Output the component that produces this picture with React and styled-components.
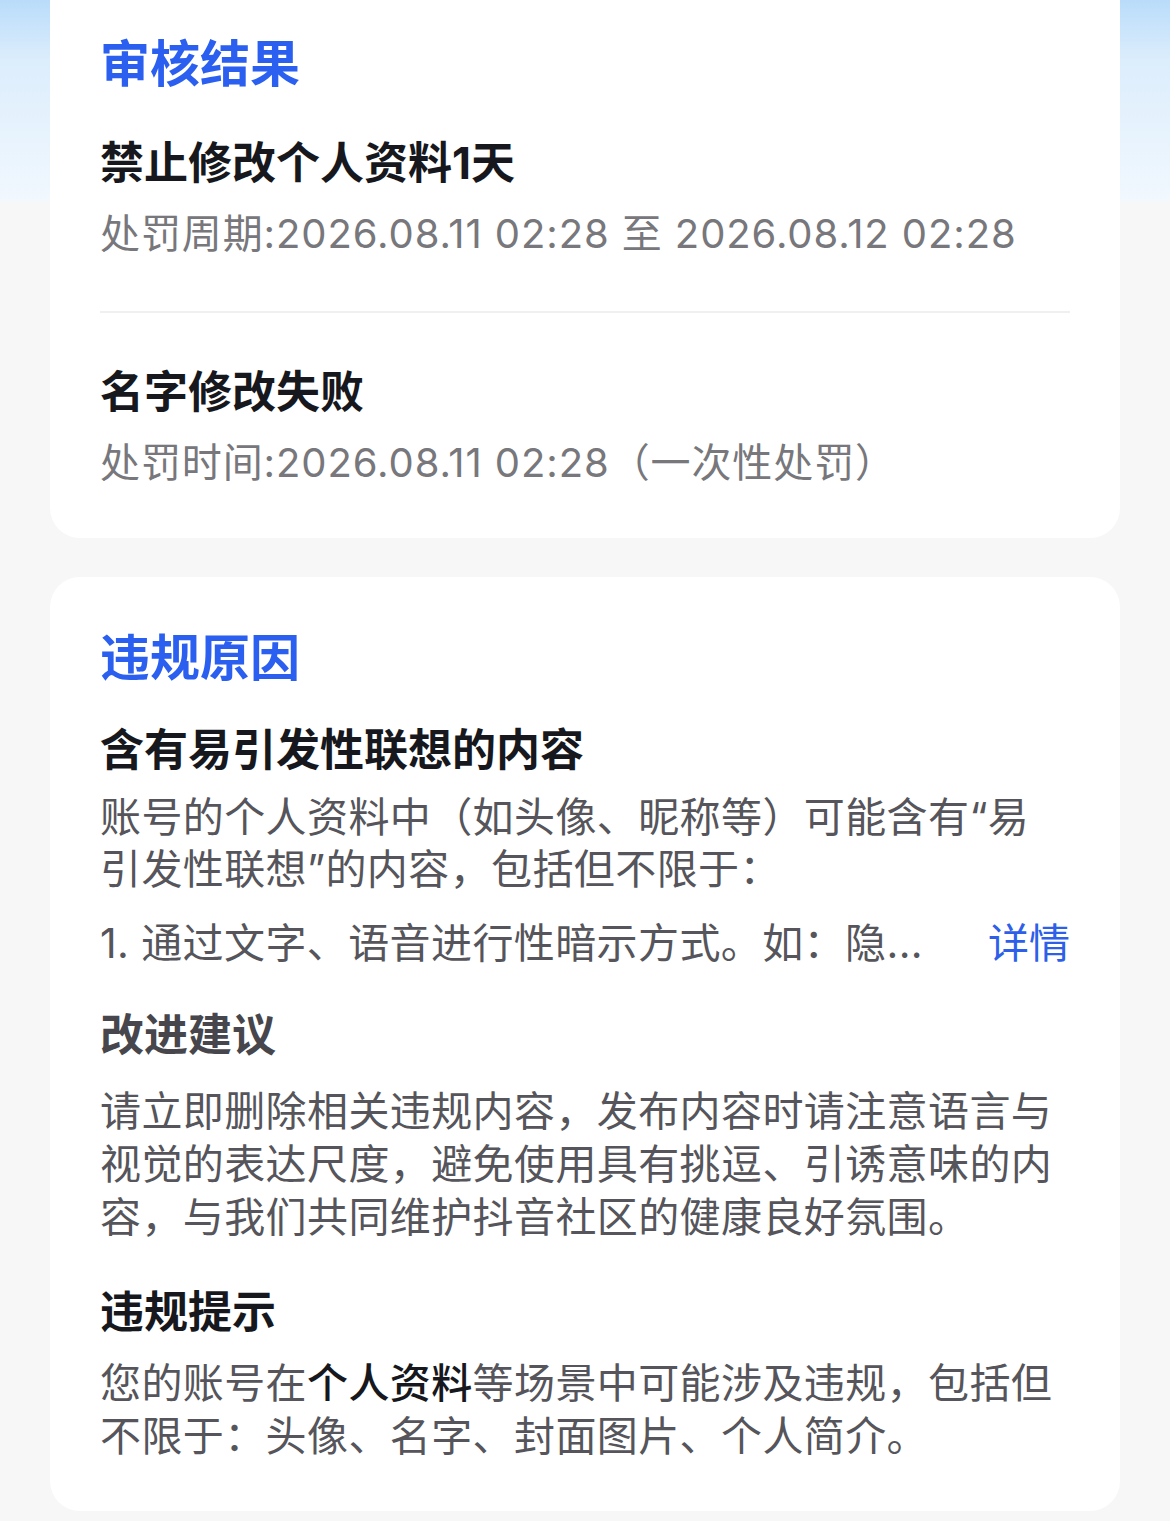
import React from "react";
import styled, { createGlobalStyle } from "styled-components";

const GlobalStyle = createGlobalStyle`
  html, body {
    margin: 0;
    padding: 0;
    background: #f7f7f8;
  }
  body {
    font-family: Inter, "Noto Sans CJK SC", "Noto Sans", sans-serif;
    -webkit-font-smoothing: antialiased;
  }
`;

const Page = styled.div`
  width: 1170px;
  min-height: 1521px;
  overflow: hidden;
  background:
    linear-gradient(180deg, #b9dcfa 0px, #dcedfc 60px, #f1f8fe 200px, #f1f8fe 201px, transparent 201px),
    #f7f7f8;
  padding: 0 50px;
  box-sizing: border-box;
  display: flex;
  flex-direction: column;
  gap: 39px;
`;

const Card = styled.section`
  background: #ffffff;
  border-radius: 30px;
  padding: ${(p) => p.$top}px 50px ${(p) => p.$bottom}px;
  margin-top: ${(p) => p.$offset || 0}px;
  display: flex;
  flex-direction: column;
`;

const SectionTitle = styled.h2`
  margin: 0;
  font-size: 50px;
  line-height: 60px;
  font-weight: 700;
  color: #2a5ff0;
`;

const ItemTitle = styled.h3`
  margin: ${(p) => p.$gap}px 0 0;
  font-size: 44px;
  line-height: 56px;
  font-weight: 700;
  color: ${(p) => (p.$muted ? "#46464c" : "#16181d")};
`;

const Meta = styled.p`
  margin: ${(p) => p.$gap}px 0 0;
  font-size: 40px;
  line-height: 52px;
  letter-spacing: 0.9px;
  color: #77777c;
  white-space: nowrap;
`;

const Divider = styled.hr`
  margin: 51px 0 0;
  border: 0;
  border-top: 2px solid #f0f0f2;
  height: 0;
`;

const Body = styled.p`
  margin: ${(p) => p.$gap}px 0 0;
  font-size: 41px;
  line-height: ${(p) => p.$lh || 53}px;
  letter-spacing: 0.4px;
  color: #55555b;
  white-space: nowrap;
`;

const Strong = styled.span`
  color: #16181d;
  font-weight: 500;
`;

const ListRow = styled.div`
  margin-top: 22px;
  display: flex;
  align-items: center;
  justify-content: space-between;
  font-size: 41px;
  line-height: 52px;
  letter-spacing: 0.4px;
`;

const ListText = styled.span`
  color: #55555b;
  white-space: nowrap;
`;

const Link = styled.a`
  color: #2d5fe8;
  text-decoration: none;
  letter-spacing: 0;
`;

export default function App() {
  return (
    <>
      <GlobalStyle />
      <Page>
        <Card $offset={-30} $top={64} $bottom={49}>
          <SectionTitle>审核结果</SectionTitle>
          <ItemTitle $gap={41}>禁止修改个人资料1天</ItemTitle>
          <Meta $gap={17}>处罚周期:2026.08.11 02:28 至 2026.08.12 02:28</Meta>
          <Divider />
          <ItemTitle $gap={51}>名字修改失败</ItemTitle>
          <Meta $gap={17}>处罚时间:2026.08.11 02:28（一次性处罚）</Meta>
        </Card>

        <Card $top={51} $bottom={48}>
          <SectionTitle>违规原因</SectionTitle>
          <ItemTitle $gap={34}>含有易引发性联想的内容</ItemTitle>
          <Body $gap={13} $lh={52}>
            账号的个人资料中（如头像、昵称等）可能含有“易
            <br />
            引发性联想”的内容，包括但不限于：
          </Body>
          <ListRow>
            <ListText>1. 通过文字、语音进行性暗示方式。如：隐...</ListText>
            <Link href="#">详情</Link>
          </ListRow>

          <ItemTitle $gap={38} $muted>改进建议</ItemTitle>
          <Body $gap={22}>
            请立即删除相关违规内容，发布内容时请注意语言与
            <br />
            视觉的表达尺度，避免使用具有挑逗、引诱意味的内
            <br />
            容，与我们共同维护抖音社区的健康良好氛围。
          </Body>

          <ItemTitle $gap={40}>违规提示</ItemTitle>
          <Body $gap={17}>
            您的账号在<Strong>个人资料</Strong>等场景中可能涉及违规，包括但
            <br />
            不限于：头像、名字、封面图片、个人简介。
          </Body>
        </Card>
      </Page>
    </>
  );
}
